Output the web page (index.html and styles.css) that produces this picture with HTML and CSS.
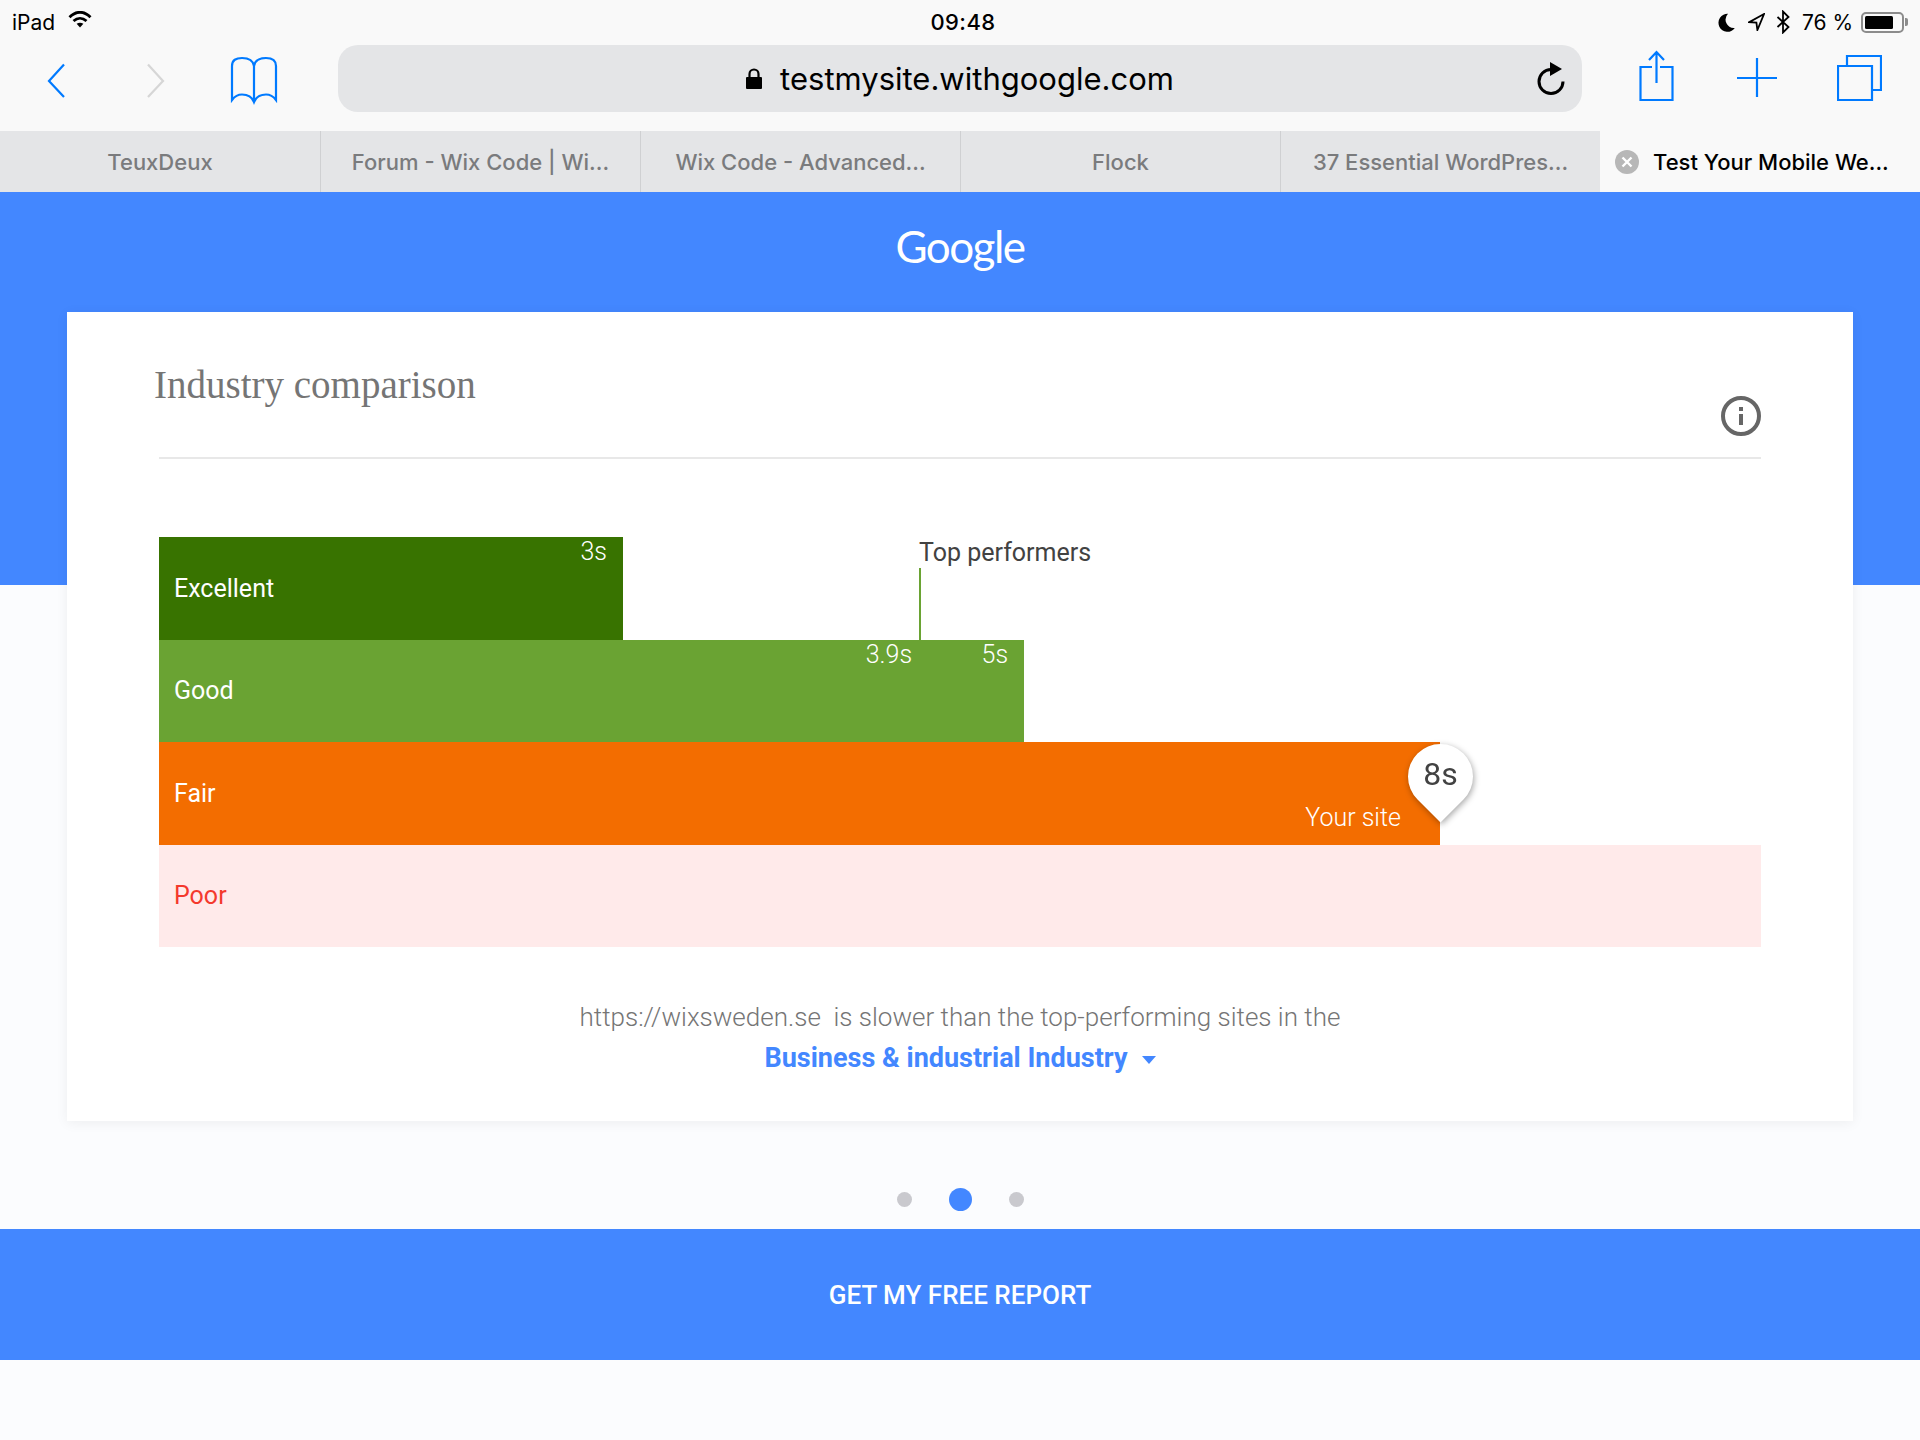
FILE: index.html
```html
<!DOCTYPE html>
<html lang="en">
<head>
<meta charset="utf-8">
<title>Test Your Mobile Website</title>
<link rel="stylesheet" href="styles.css">
</head>
<body>
<header class="chrome">
  <div class="status">
    <div class="status-left">
      <span>iPad</span>
      <svg class="wifi" width="24" height="17" viewBox="0 0 24 17"><path d="M1.5 6.2C8-.4 16-.4 22.5 6.2" class="wifi-arc"/><path d="M5.5 10C9.5 6.4 14.5 6.4 18.5 10" class="wifi-arc"/><path d="M8.6 12.8Q12 10.6 15.4 12.8L12 16.6Z" class="wifi-dot"/></svg>
    </div>
    <div class="status-time">09:48</div>
    <div class="status-right">
      <svg width="17" height="19" viewBox="0 0 17 19"><path d="M10 .8A9 9 0 1 0 16.8 15 8.4 8.4 0 0 1 10 .8Z" class="fill-black"/></svg>
      <svg class="st-loc" width="17" height="18" viewBox="0 0 17 18"><path d="M16 1 1.2 9.2 8.4 9.6 9.4 17Z" class="line-black"/></svg>
      <svg class="st-bt" width="14" height="24" viewBox="0 0 14 24"><path d="M1.5 7 12.5 17 7 22.5V1.5L12.5 7 1.5 17" class="line-black"/></svg>
      <span class="st-pct">76 %</span>
      <div class="battery"><div class="battery-level"></div></div>
      <div class="battery-nub"></div>
    </div>
  </div>
  <div class="toolbar">
    <svg class="t-back" width="18" height="67" viewBox="0 0 18 67"><path d="M17 19.5 2 36 17 52" class="ic"/></svg>
    <svg class="t-forward" width="18" height="67" viewBox="0 0 18 67"><path d="M1 19.5 16 36 1 52" class="ic ic-off"/></svg>
    <svg class="t-book" width="48" height="67" viewBox="0 0 48 67"><path d="M24 21C23 15 18 13 12 13 6 13 2 15 2 21V55C5 51 8 49.500 12 49.500 18 49.500 22 52 24 57 26 52 30 49.500 36 49.500 40 49.500 43 51 46 55V21C46 15 42 13 36 13 30 13 25 15 24 21V57" class="ic"/></svg>
    <div class="address">
      <span></span>
      <div class="address-url">
        <svg width="16" height="21" viewBox="0 0 16 21"><path d="M3.500 10V6a4.500 4.500 0 0 1 9 0V10" class="lock-arc"/><rect y="9" width="16" height="12" rx="1" class="fill-black"/></svg>
        <span>testmysite.withgoogle.com</span>
      </div>
      <svg class="reload" width="30" height="34" viewBox="0 0 30 34"><path d="M15 7.500A12 12 0 1 0 27 19.500" class="reload-arc"/><path d="M14 0V14L26 7Z" class="fill-black"/></svg>
    </div>
    <svg class="t-share" width="35" height="67" viewBox="0 0 35 67"><path d="M13 22H1.500V55H33.500V22H21M17.500 7V38M10 15 17.500 7 25 15" class="ic"/></svg>
    <svg class="t-plus" width="40" height="67" viewBox="0 0 40 67"><path d="M20 13V52M0 33H40" class="ic"/></svg>
    <svg class="t-tabs" width="45" height="67" viewBox="0 0 45 67"><path d="M1 21H35V55H1ZM10 21V11H44V45H36" class="ic"/></svg>
  </div>
  <nav class="tabs">
    <div class="tab">TeuxDeux</div>
    <div class="tab">Forum - Wix Code | Wi...</div>
    <div class="tab">Wix Code - Advanced...</div>
    <div class="tab">Flock</div>
    <div class="tab">37 Essential WordPres...</div>
    <div class="tab tab-active">
      <svg width="24" height="24" viewBox="0 0 24 24"><circle cx="12" cy="12" r="12" class="close-bg"/><path d="M7.500 7.500 16.500 16.500M16.500 7.500 7.500 16.500" class="close-x"/></svg>
      <span>Test Your Mobile We...</span>
    </div>
  </nav>
</header>
<main class="page">
  <div class="logo">Google</div>
  <section class="card">
    <div class="card-head">
      <h1 class="card-title">Industry comparison</h1>
      <svg class="info" width="40" height="40" viewBox="0 0 40 40"><circle cx="20" cy="20" r="18" class="info-ring"/><rect x="18" y="18" width="4" height="11" class="info-mark"/><rect x="18" y="11" width="4" height="4" class="info-mark"/></svg>
    </div>
    <div class="chart">
      <div class="top-label">Top performers</div>
      <div class="top-line"></div>
      <div class="bar bar-excellent" style="width:28.96%"><span>Excellent</span><span class="val val-end">3s</span></div>
      <div class="bar bar-good" style="width:54%"><span>Good</span><span class="val val-mid">3.9s</span><span class="val val-end">5s</span></div>
      <div class="bar bar-fair" style="width:79.96%"><span>Fair</span><span class="your-site">Your site</span>
        <div class="pin"><div class="pin-shape"></div><span class="pin-text">8s</span></div>
      </div>
      <div class="bar bar-poor" style="width:100%"><span>Poor</span></div>
    </div>
    <p class="caption">https://wixsweden.se&nbsp; is slower than the top-performing sites in the</p>
    <p class="industry">Business &amp; industrial Industry<span class="caret"></span></p>
  </section>
  <div class="pager"><span class="dot"></span><span class="dot dot-active"></span><span class="dot"></span></div>
  <div class="cta">GET MY FREE REPORT</div>
</main>
</body>
</html>
```
FILE: styles.css
```css
* { box-sizing: border-box; }
html, body { margin: 0; padding: 0; }
body {
  width: 1920px;
  height: 1440px;
  overflow: hidden;
  background: #fbfcfe;
  font-family: "Roboto", sans-serif;
}
svg { display: block; flex: none; }

.chrome { background: #f9f9f9; }
.status {
  height: 44px;
  display: flex;
  align-items: center;
  font-family: "Inter", sans-serif;
  font-size: 21px;
  color: #000;
}
.status-left { width: 880px; padding-left: 12px; display: flex; align-items: center; gap: 13px; }
.status-time { font-weight: 500; font-size: 22px; width: 166px; text-align: center; letter-spacing: .4px; }
.status-right { flex: 1; display: flex; align-items: center; justify-content: flex-end; padding-right: 12px; }
.wifi { margin-top: -6px; }
.wifi-arc { fill: none; stroke: #000; stroke-width: 2.8; }
.wifi-dot, .fill-black { fill: #000; }
.line-black { fill: none; stroke: #000; stroke-width: 1.8; }
.st-loc { margin-left: 13px; }
.st-bt { margin-left: 11px; }
.st-pct { margin-left: 12px; }
.battery {
  margin-left: 8px;
  width: 43px;
  height: 21px;
  border: 2px solid #8c8c8c;
  border-radius: 5px;
  padding: 2px;
}
.battery-level { width: 80%; height: 100%; background: #000; border-radius: 1.5px; }
.battery-nub { width: 3px; height: 8px; margin-left: 1px; background: #8c8c8c; border-radius: 0 2px 2px 0; }

.toolbar {
  height: 87px;
  padding: 1px 38px 19px 47px;
  display: flex;
  align-items: stretch;
}
.ic { fill: none; stroke: #007aff; stroke-width: 2.2; }
.ic-off { stroke: #d6d6d6; }
.t-forward { margin-left: 82px; }
.t-book { margin-left: 65px; }
.address {
  margin-left: 60px;
  width: 1244px;
  background: #e4e5e7;
  border-radius: 20px;
  display: grid;
  grid-template-columns: 1fr auto 1fr;
  align-items: center;
}
.address-url {
  display: flex;
  align-items: center;
  gap: 18px;
  font-family: "Inter", sans-serif;
  font-size: 31px;
  color: #000;
}
.lock-arc { fill: none; stroke: #000; stroke-width: 2.2; }
.reload { justify-self: end; margin-right: 16px; }
.reload-arc { fill: none; stroke: #000; stroke-width: 3; }
.t-share { margin-left: 57px; }
.t-plus { margin-left: 63px; }
.t-tabs { margin-left: 60px; }

.tabs { display: flex; height: 61px; }
.tab {
  width: 320px;
  display: flex;
  align-items: center;
  justify-content: center;
  background: #e4e5e7;
  border-left: 1px solid #cfd0d2;
  font-family: "Inter", sans-serif;
  font-size: 22px;
  font-weight: 500;
  color: #7a7b7d;
  white-space: nowrap;
}
.tab:first-child { border-left: 0; }
.tab-active {
  background: #f9f9f9;
  border-left: 0;
  color: #000;
  justify-content: flex-start;
  padding-left: 15px;
  gap: 14px;
}
.close-bg { fill: #b7b7b7; }
.close-x { stroke: #fff; stroke-width: 2.4; fill: none; }

.page {
  height: 1248px;
  background: linear-gradient(#4387ff 393px, transparent 393px);
  display: flex;
  flex-direction: column;
}
.logo {
  height: 77px;
  margin-top: 0;
  padding-top: 29px;
  height: 120px;
  text-align: center;
  font-family: "Lato", sans-serif;
  font-size: 44px;
  line-height: 50px;
  color: #fff;
  letter-spacing: -1.5px;
}
.card {
  margin: 0 67px;
  height: 809px;
  padding: 0 92px;
  background: #fff;
  box-shadow: 0 2px 12px rgba(0, 0, 0, .06);
}
.card-head {
  height: 147px;
  display: flex;
  justify-content: space-between;
  align-items: flex-start;
  border-bottom: 2px solid #e8e8e8;
}
.card-title {
  margin: 50px 0 0 -5px;
  font-family: "Liberation Serif", serif;
  font-weight: 400;
  font-size: 39px;
  line-height: 46px;
  color: #757575;
}
.info { margin-top: 84px; }
.info-ring { fill: none; stroke: #666; stroke-width: 4; }
.info-mark { fill: #666; }

.chart {
  position: relative;
  margin-top: 78px;
  height: 410px;
  display: grid;
  grid-template-rows: repeat(4, 1fr);
}
.top-label {
  position: absolute;
  left: 760px;
  top: 0;
  font-size: 25px;
  line-height: 32px;
  color: #424242;
}
.top-line {
  position: absolute;
  left: 760px;
  top: 31px;
  width: 2px;
  height: 72px;
  background: #6aa333;
}
.bar {
  position: relative;
  display: flex;
  align-items: center;
  padding-left: 15px;
  font-size: 25px;
  color: #fff;
}
.bar-excellent { background: #387300; }
.bar-good { background: #6aa333; }
.bar-fair { background: #f36d00; }
.bar-poor { background: #ffeaea; color: #f4392d; }
.val { position: absolute; top: 0; line-height: 30px; font-weight: 300; }
.val-end { right: 16px; }
.val-mid { right: 112px; }
.your-site { position: absolute; right: 39px; bottom: 12px; line-height: 30px; font-weight: 300; }
.pin {
  position: absolute;
  right: -33px;
  top: 2px;
  width: 65px;
  height: 78px;
  filter: drop-shadow(1px 2px 3px rgba(0, 0, 0, .35));
}
.pin-shape {
  width: 65px;
  height: 65px;
  background: #fff;
  border-radius: 50% 50% 0 50%;
  transform: rotate(45deg);
}
.pin-text {
  position: absolute;
  left: 0;
  right: 0;
  top: 8px;
  text-align: center;
  font-size: 32px;
  line-height: 44px;
  color: #424242;
}
.caption {
  margin: 50px 0 0;
  text-align: center;
  font-size: 26px;
  line-height: 40px;
  font-weight: 300;
  color: #757575;
}
.industry {
  margin: 1px 0 0;
  text-align: center;
  font-size: 27px;
  line-height: 40px;
  font-weight: 700;
  color: #4387ff;
}
.caret {
  display: inline-block;
  margin-left: 14px;
  vertical-align: 3px;
  border-top: 8px solid #4387ff;
  border-left: 7px solid transparent;
  border-right: 7px solid transparent;
}
.pager {
  height: 108px;
  padding-top: 48px;
  display: flex;
  align-items: center;
  justify-content: center;
  gap: 37px;
}
.dot { width: 15px; height: 15px; border-radius: 50%; background: #c9c9ce; }
.dot-active { width: 23px; height: 23px; background: #4387ff; }
.cta {
  height: 131px;
  display: flex;
  align-items: center;
  justify-content: center;
  background: #4387ff;
  color: #fff;
  font-size: 26px;
  font-weight: 500;
}
```
